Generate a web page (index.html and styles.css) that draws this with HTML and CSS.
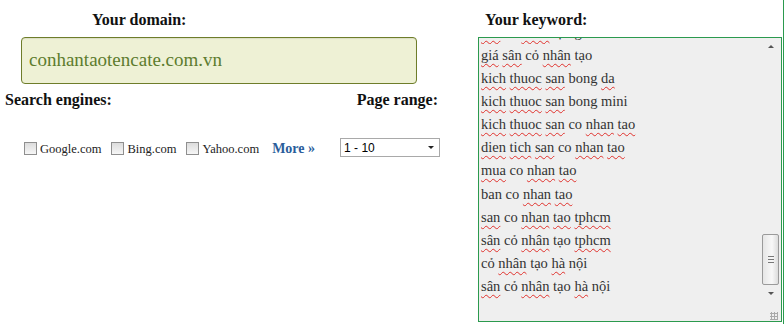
FILE: index.html
```html
<!DOCTYPE html>
<html>
<head>
<meta charset="utf-8">
<link rel="stylesheet" href="styles.css">
</head>
<body>
<div class="page">
  <div class="left">
    <div class="label center">Your domain:</div>
    <div class="domain">conhantaotencate.com.vn</div>
    <div class="row-labels">
      <span class="label">Search engines:</span>
      <span class="label">Page range:</span>
    </div>
    <div class="engines">
      <label class="eng"><span class="cb"></span>Google.com</label>
      <label class="eng"><span class="cb"></span>Bing.com</label>
      <label class="eng"><span class="cb"></span>Yahoo.com</label>
      <a class="more">More »</a>
      <div class="select"><span>1 - 10</span><span class="arrow"></span></div>
    </div>
  </div>
  <div class="right">
    <div class="label kw">Your keyword:</div>
    <div class="ta">
      <div class="lines">
        <div class="first"><div class="line"><u>sân</u> cỏ <u>nhân</u> tạo giá rẻ</div></div>
        <div class="line"><u>giá</u> <u>sân</u> cỏ <u>nhân</u> tạo</div>
        <div class="line"><u>kich</u> <u>thuoc</u> <u>san</u> bong <u>da</u></div>
        <div class="line"><u>kich</u> <u>thuoc</u> <u>san</u> bong mini</div>
        <div class="line"><u>kich</u> <u>thuoc</u> <u>san</u> co <u>nhan</u> <u>tao</u></div>
        <div class="line"><u>dien</u> <u>tich</u> <u>san</u> co <u>nhan</u> <u>tao</u></div>
        <div class="line"><u>mua</u> co <u>nhan</u> <u>tao</u></div>
        <div class="line">ban co <u>nhan</u> <u>tao</u></div>
        <div class="line"><u>san</u> co <u>nhan</u> <u>tao</u> <u>tphcm</u></div>
        <div class="line"><u>sân</u> cỏ <u>nhân</u> tạo <u>tphcm</u></div>
        <div class="line">cỏ <u>nhân</u> tạo <u>hà</u> nội</div>
        <div class="line"><u>sân</u> cỏ <u>nhân</u> tạo <u>hà</u> nội</div>
      </div>
      <div class="sb">
        <div class="sb-up"></div>
        <div class="sb-track"><div class="sb-thumb"><span></span><span></span><span></span></div></div>
        <div class="sb-down"></div>
        <div class="grip"></div>
      </div>
    </div>
  </div>
  <div class="edge"></div>
</div>
</body>
</html>
```
FILE: styles.css
```css
html, body { margin: 0; padding: 0; background: #fff; }
body { font-family: "Liberation Serif", "DejaVu Serif", serif; color: #111; }
.page { display: flex; width: 784px; height: 324px; overflow: hidden; }
.left { width: 440px; display: flex; flex-direction: column; }
.label { font-weight: bold; font-size: 16px; color: #111; }
.center { padding-left: 92px; margin-top: 10px; line-height: 20px; }
.domain {
  margin: 7px 0 0 21px; width: 387px; height: 45px;
  border: 1px solid #6e7d2a; border-radius: 4px; background: #eef1d5;
  font-size: 19px; color: #5d7c2e; padding-left: 7px; line-height: 44px;
  box-shadow: inset 0 1px 1px rgba(0,0,0,0.08);
}
.row-labels { display: flex; justify-content: space-between; padding: 7px 2px 0 5px; line-height: 18px; }
.engines { display: flex; align-items: center; margin-top: 32px; padding-left: 24px; font-size: 12.5px; white-space: nowrap; }
.eng { display: flex; align-items: center; color: #222; margin-right: 10px; }
.cb { width: 11px; height: 11px; border: 1px solid #8f8f8f; background: linear-gradient(#dcdcdc, #f6f6f6); margin-right: 3px; margin-top: -2px; }
.more { color: #2a5d9b; font-weight: bold; font-size: 14px; margin-left: 3px; }
.select {
  margin-left: 25px; width: 96px; height: 17px; border: 1px solid #a9a9a9;
  display: flex; align-items: center; justify-content: space-between;
  font-family: "Liberation Sans", Arial, sans-serif; font-size: 12px; color: #000;
  padding-left: 3px; box-sizing: content-box; margin-top: -3px;
}
.arrow { width: 0; height: 0; border-left: 3px solid transparent; border-right: 3px solid transparent; border-top: 3px solid #222; margin-right: 5px; }
.right { margin-left: 38px; display: flex; flex-direction: column; }
.kw { padding-left: 7px; margin-top: 10px; line-height: 20px; }
.ta {
  margin-top: 7px; width: 302px; height: 283px; border: 1px solid #2b9a4e;
  background: #efefef; display: flex; overflow: hidden;
}
.lines { flex: 1; padding-left: 2px; font-size: 14.5px; color: #333; overflow: hidden; }
.line { height: 23.1px; line-height: 23px; white-space: nowrap; }
.first { height: 6px; overflow: hidden; display: flex; flex-direction: column; justify-content: flex-end; }
.first .line { flex: none; }
u { text-decoration: underline wavy #e0312c; text-decoration-thickness: 1px; text-underline-offset: 3px; }
.sb { width: 17px; position: relative; background: #efefef; margin-right: 2px; display: flex; flex-direction: column; }
.sb-up, .sb-down { height: 16px; position: relative; }
.sb-up::after, .sb-down::after { content: ""; position: absolute; left: 6px; width: 0; height: 0; border-left: 3px solid transparent; border-right: 3px solid transparent; }
.sb-up::after { top: 7px; border-bottom: 3px solid #555; }
.sb-down::after { top: 7px; border-top: 3px solid #555; }
.sb-track { flex: 1; display: flex; flex-direction: column; justify-content: flex-end; }
.sb-thumb { height: 49px; border: 1px solid #9a9a9a; border-radius: 2px; background: linear-gradient(90deg, #e6e6e6, #f8f8f8 60%, #dcdcdc); display: flex; flex-direction: column; justify-content: center; align-items: center; gap: 2px; }
.sb-thumb span { width: 6px; height: 1px; background: #777; }
.grip { height: 20px; }
.grip::after { content: ""; position: absolute; right: 1px; bottom: 1px; width: 8px; height: 8px; background: radial-gradient(circle, #aaa 1px, transparent 1.2px) 0 0 / 3px 3px; }
.edge { width: 1px; background: #2b9a4e; margin-left: 1px; }
```
